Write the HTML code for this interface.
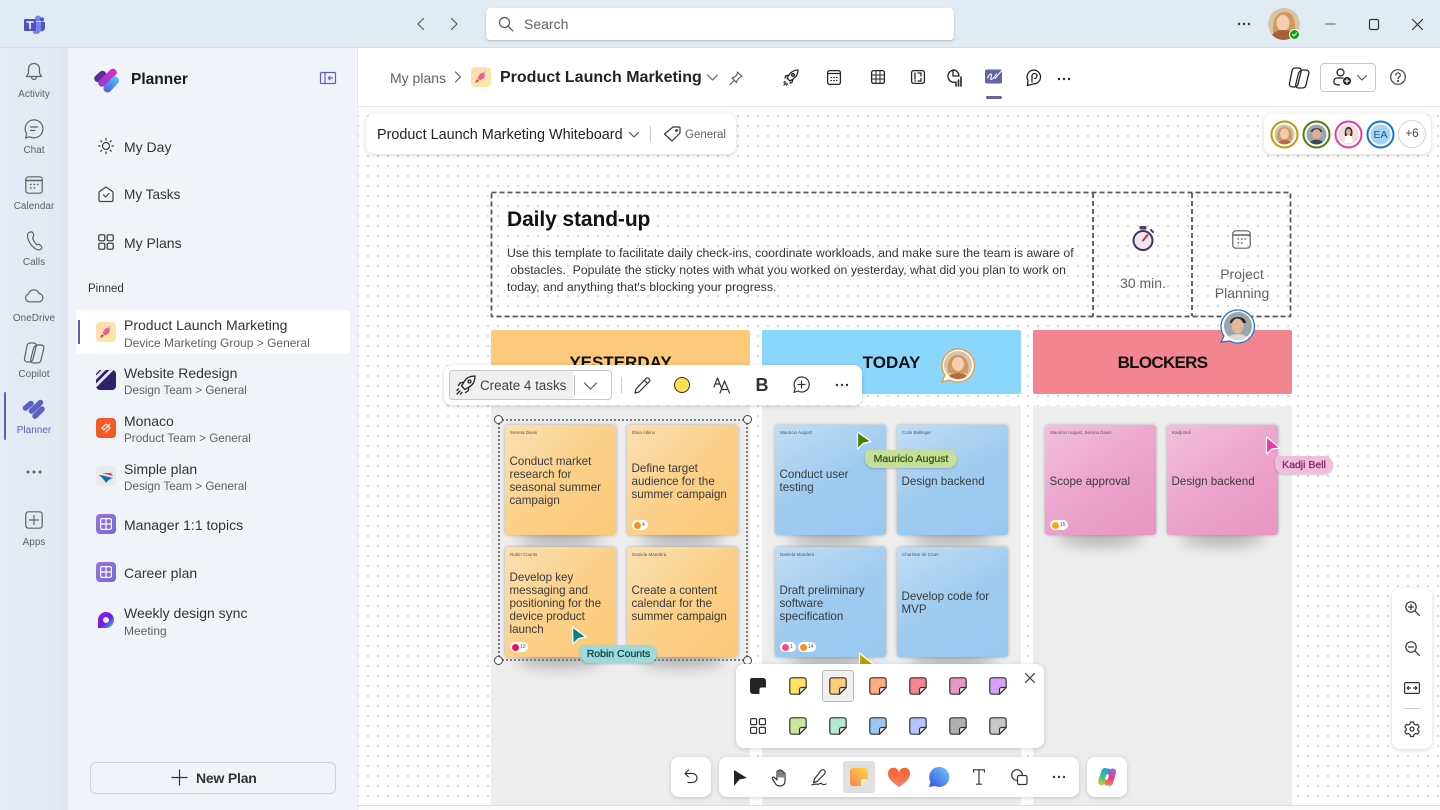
<!DOCTYPE html>
<html lang="en"><head><meta charset="utf-8"><title>Planner</title>
<style>
*{box-sizing:border-box}
html,body{margin:0;padding:0;width:1440px;height:810px;overflow:hidden;background:#fff}
body{font-family:"Liberation Sans",sans-serif;color:#242424;position:relative}
.a{position:absolute}
.t{position:absolute;white-space:nowrap;line-height:16px;height:16px}
svg{position:absolute;overflow:visible;fill:none;stroke:#424242;stroke-width:1.2;stroke-linecap:round;stroke-linejoin:round}
.lab{position:absolute;left:0;width:68px;text-align:center;font-size:10px;color:#616161;line-height:12px}
.nav{font-size:14px;color:#333;left:124px}
.ti{font-size:14px;color:#333;left:124px}
.su{font-size:12px;color:#616161;left:124px}
.pic{position:absolute;left:96px;width:20px;height:20px;border-radius:4px}
.panel{position:absolute;background:#fff;border-radius:8px;box-shadow:0 1px 5px rgba(0,0,0,.18)}
.hd{position:absolute;top:330px;height:64px;width:259px;border-radius:2px;text-align:center;font-size:17px;font-weight:bold;line-height:66px;color:#111}
.col{position:absolute;top:406px;height:399px;width:259px;background:#ededed}
.s{position:absolute;width:111px;height:110px;border-radius:3px;box-shadow:0 0 3px rgba(0,0,0,.3);font-size:11.6px;line-height:13px;color:#3a3a3a;display:flex;align-items:center;padding:2px 4px 0 4.5px;white-space:nowrap}
.sh{position:absolute;width:84px;height:18px;background:rgba(0,0,0,.24);filter:blur(7px);border-radius:50%}
.o{background:linear-gradient(135deg,#fbe0b2 0%,#fbd08a 50%,#fbc976 100%)}
.b{background:linear-gradient(150deg,#c0def6 0%,#9fcbf0 50%,#98c7ee 100%)}
.p{background:linear-gradient(145deg,#f3c0de 0%,#eba2cb 55%,#e995c3 100%)}
.n{position:absolute;left:5px;top:5px;font-size:4.5px;line-height:6px;color:#555}
.r{position:absolute;height:10px;background:#fff;border-radius:5px;font-size:5px;line-height:10px;color:#555;padding-left:10px;bottom:5px}
.r i{position:absolute;left:2px;top:1.5px;width:7px;height:7px;border-radius:50%}
.h{position:absolute;width:9px;height:9px;border-radius:50%;background:#fff;border:1.5px solid #444}
.cl{position:absolute;height:18px;border-radius:4px 10px 10px 10px;font-size:10.5px;line-height:18px;text-align:center;box-shadow:0 1px 2px rgba(0,0,0,.2);-webkit-text-stroke:.3px currentColor}
.w{stroke:#242424;stroke-width:1.3}
</style></head><body>

<!-- top bar -->
<div class="a" style="left:0;top:0;width:1440px;height:48px;background:#e1ebf2;border-bottom:1px solid #d3dde5"></div>
<!-- rail -->
<div class="a" style="left:0;top:48px;width:68px;height:762px;background:linear-gradient(90deg,#e5ebf3 0%,#e3e9f2 85%,#dbe3ed 100%)"></div>
<!-- left pane -->
<div class="a" style="left:68px;top:48px;width:290px;height:762px;background:#f0f4f9;border-right:1px solid #e3e6ea"></div>
<!-- canvas -->
<div class="a" style="left:358px;top:106px;width:1082px;height:699px;background-color:#fff;background-image:radial-gradient(circle at 1px 1px,#b6b6b6 .6px,transparent 1px);background-size:10px 10px;background-position:9px 8px;border-top:1px solid #e6e6e6"></div>
<div class="a" style="left:358px;top:805px;width:1082px;height:5px;background:#fbfbfb;border-top:1px solid #ddd"></div>

<!-- teams logo -->
<svg style="left:24px;top:15px;stroke:none" width="21" height="19" viewBox="0 0 21 19"><circle cx="14" cy="3.500" r="3" fill="#7b83eb"/><circle cx="18" cy="4.500" r="2.200" fill="#5059c9"/><path d="M13 7h7a1 1 0 0 1 1 1v5a3.500 3.500 0 0 1-5 3z" fill="#5059c9"/><path d="M9 7h8v8a5 5 0 0 1-8 3z" fill="#7b83eb"/><rect x="0" y="4" width="12" height="12" rx="1" fill="#4b53bc"/><path d="M3 7h6M6 7v6.500" stroke="#fff" stroke-width="1.600"/></svg>

<svg style="left:416px;top:17px" width="10" height="14"><path d="M7.500 1.500 2 7l5.500 5.500" stroke="#555" stroke-width="1.200"/></svg>
<svg style="left:449px;top:17px" width="10" height="14"><path d="M2.500 1.500 8 7l-5.500 5.500" stroke="#555" stroke-width="1.200"/></svg>
<div class="a" style="left:486px;top:8px;width:468px;height:32px;background:#fff;border-radius:4px;box-shadow:0 1px 2px rgba(0,0,0,.22)"></div>
<svg style="left:498px;top:16px" width="16" height="16"><circle cx="6.500" cy="6.500" r="5" stroke="#555"/><path d="m10.200 10.200 4.800 4.800" stroke="#555"/></svg>
<div class="t" style="left:524px;top:16px;font-size:14px;color:#616161">Search</div>

<svg style="left:1237px;top:22px;stroke:none;fill:#333" width="15" height="4"><circle cx="2" cy="2" r="1.200"/><circle cx="7" cy="2" r="1.200"/><circle cx="12" cy="2" r="1.200"/></svg>
<svg style="left:1268px;top:8px;stroke:none" width="32" height="33" viewBox="0 0 32 33"><circle cx="16" cy="16" r="16" fill="#d8c3ab"/><path d="M5 24C5 8 10 4 17 4s11 6 10 20l-5 4H8z" fill="#d19a5a"/><ellipse cx="15" cy="15" rx="6.500" ry="8" fill="#f3cdb0"/><path d="M4 27c4-5 8-5 11-5s8 0 12 5a16 16 0 0 1-23 0z" fill="#a8603a"/><circle cx="26.500" cy="26.500" r="5" fill="#13a10e" stroke="#fff" stroke-width="1"/><path d="m24.500 26.500 1.500 1.500 2.500-3" stroke="#fff" stroke-width="1"/></svg>
<svg style="left:1326px;top:23px" width="10" height="2"><path d="M0 1h9" stroke="#8a8a8a" stroke-width="1.500"/></svg>
<svg style="left:1369px;top:19px" width="11" height="11"><rect x=".5" y=".5" width="9" height="10" rx="1.500" stroke="#333"/></svg>
<svg style="left:1412px;top:19px" width="11" height="11"><path d="m.5.500 10 10m0-10-10 10" stroke="#333"/></svg>

<!-- rail icons -->
<svg style="left:25px;top:62px" width="18" height="20"><path d="M9 1.500c-3.500 0-5.500 2.500-5.500 6v3.500L1.500 14.500h15L14.500 11V7.500c0-3.500-2-6-5.500-6zM6.500 15a2.500 2.500 0 0 0 5 0" stroke="#616161"/></svg>
<div class="lab" style="top:89px">Activity</div>
<svg style="left:24px;top:119px" width="20" height="20"><path d="M10 .8a9 9 0 1 1-4.200 17L1.500 19l1.200-4.200A9 9 0 0 1 10 .8zM6.500 8h7M6.500 11.500h4.500" stroke="#616161"/></svg>
<div class="lab" style="top:145px">Chat</div>
<svg style="left:25px;top:176px" width="18" height="18"><rect x=".8" y=".8" width="16.400" height="16.400" rx="2.500" stroke="#616161"/><path d="M1 4.500h16M5.500 8.500h.5M9 8.500h.5M12.500 8.500h.5M5.500 12h.5M9 12h.5" stroke="#616161" stroke-width="1.400"/></svg>
<div class="lab" style="top:201px">Calendar</div>
<svg style="left:26px;top:231px" width="17" height="20"><path d="M3 1.500 5.500.8c1 0 1.500 1 2 2.500.4 1.500.2 2.500-1 3.500 1 2.800 2.500 5.500 4.500 7 1.300-.8 2.300-.8 3.500.5 1 1 1.800 2 1.200 3-.8 1.300-2.500 2-4 1.500C7 17.500 2 11 1.500 5c-.1-1.500.4-3 1.500-3.500z" stroke="#616161"/></svg>
<div class="lab" style="top:257px">Calls</div>
<svg style="left:24px;top:288px" width="20" height="15"><path d="M5 13.800A4 4 0 0 1 4.500 6 5.500 5.500 0 0 1 15 5.500 4.200 4.200 0 0 1 15.500 13.800z" stroke="#616161"/></svg>
<div class="lab" style="top:313px">OneDrive</div>
<svg style="left:23px;top:342px" width="22" height="22"><path d="M7 1h3.500c2 0 3 1.500 2.700 3L10 17c-.4 1.800-1.800 3-3.800 3H4.500C2.500 20 1 18.500 1.500 16.500L4 4c.4-1.800 1.500-3 3-3z" stroke="#616161"/><path d="M15 3h3c2 0 3.300 1.500 2.800 3.500L18 18c-.4 2-2 3-4 3h-3.500c-2 0-3.200-1.500-2.800-3.500L10.500 6.500C11 4.500 13 3 15 3z" stroke="#616161"/></svg>
<div class="lab" style="top:369px">Copilot</div>
<div class="a" style="left:4px;top:392px;width:2px;height:48px;background:#5b5fc7;border-radius:1px"></div>
<svg style="left:22px;top:398px" width="24" height="22" viewBox="0 0 24 22"><path d="M3.500 10 9 5.500M9.500 13 18.500 4.500M13 18 20 11" stroke="#5b5fc7" stroke-width="5.500"/></svg>
<div class="lab" style="top:425px;color:#5b5fc7">Planner</div>
<svg style="left:26px;top:470px;stroke:none;fill:#616161" width="16" height="4"><circle cx="2" cy="2" r="1.500"/><circle cx="8" cy="2" r="1.500"/><circle cx="14" cy="2" r="1.500"/></svg>
<svg style="left:25px;top:511px" width="18" height="18"><rect x=".8" y=".8" width="16.400" height="16.400" rx="2.500" stroke="#616161"/><path d="M9 4.500v9M4.500 9h9" stroke="#616161"/></svg>
<div class="lab" style="top:537px">Apps</div>

<!-- left pane content -->
<svg style="left:93px;top:67px" width="28" height="27" viewBox="0 0 28 27"><defs><linearGradient id="g1" gradientUnits="userSpaceOnUse" x1="8" y1="18" x2="22" y2="4"><stop offset="0" stop-color="#8a3fd0"/><stop offset="1" stop-color="#e02cc4"/></linearGradient><linearGradient id="g2" gradientUnits="userSpaceOnUse" x1="22" y1="10" x2="14" y2="26"><stop offset="0" stop-color="#4ac6f0"/><stop offset="1" stop-color="#5a55e0"/></linearGradient></defs><path d="M5 11.500 9.500 7.500" stroke="#5d2a9c" stroke-width="7.500"/><path d="M9 16 20 5.500" stroke="url(#g1)" stroke-width="7.500"/><path d="M14.500 21.500 22 13.500" stroke="url(#g2)" stroke-width="8"/></svg>
<div class="t" style="left:131px;top:72px;font-size:15.500px;font-weight:bold;color:#1a1a1a">Planner</div>
<svg style="left:320px;top:72px" width="16" height="12"><rect x=".5" y=".5" width="15" height="11" rx="1" stroke="#5b5fc7"/><path d="M5 .5v11M12.500 6H8.500M10 4.200 8.300 6 10 7.800" stroke="#5b5fc7"/></svg>

<svg style="left:98px;top:138px" width="16" height="16"><circle cx="8" cy="8" r="3.500" stroke="#424242"/><path d="M8 .5v1.500M8 14v1.500M.5 8H2M14 8h1.500M2.700 2.700l1 1M12.300 12.300l1 1M13.300 2.700l-1 1M3.700 12.300l-1 1" stroke="#424242"/></svg>
<div class="t nav" style="top:139px">My Day</div>
<svg style="left:98px;top:186px" width="16" height="17"><path d="M8 1 1.500 5.500c-.3.200-.5.600-.5 1V14c0 1 .6 1.500 1.500 1.500h11c.9 0 1.500-.5 1.500-1.500V6.500c0-.4-.2-.8-.5-1zM5.500 9l2 2 3.500-3.500" stroke="#424242"/></svg>
<div class="t nav" style="top:187px;font-size:13.600px">My Tasks</div>
<svg style="left:98px;top:234px" width="16" height="16"><rect x=".8" y=".8" width="6" height="6" rx="1.200" stroke="#333"/><rect x="9.200" y=".8" width="6" height="6" rx="1.200" stroke="#333"/><rect x=".8" y="9.200" width="6" height="6" rx="1.200" stroke="#333"/><rect x="9.200" y="9.200" width="6" height="6" rx="1.200" stroke="#333"/></svg>
<div class="t nav" style="top:235px">My Plans</div>
<div class="t" style="left:88px;top:281px;font-size:11.500px;color:#333">Pinned</div>

<div class="a" style="left:76px;top:310px;width:274px;height:44px;background:#fff;border-radius:4px"></div>
<div class="a" style="left:78px;top:320px;width:2px;height:24px;background:#5b5fc7"></div>

<div class="pic" style="top:322px;background:linear-gradient(135deg,#fddcae,#fbe8a8)"></div>
<svg style="left:99px;top:325px;stroke:none" width="14" height="14"><path d="M12 1 6 4 3.500 8l2.500 2.500 4-2.500z" fill="#e8608a"/><path d="M12 1 9 2.500 11 5z" fill="#b8c4f0"/><path d="M3 9 1 13l4-2z" fill="#d02c60"/></svg>
<div class="t ti" style="top:317px">Product Launch Marketing</div>
<div class="t su" style="top:335px">Device Marketing Group &gt; General</div>

<div class="pic" style="top:370px;background:#2f2168;overflow:hidden"><div class="a" style="left:-6px;top:-2px;width:30px;height:2.500px;background:#e8e4f6;transform:rotate(-45deg);transform-origin:left;margin-top:14px"></div><div class="a" style="left:-2px;top:2px;width:30px;height:2.500px;background:#e8e4f6;transform:rotate(-45deg);transform-origin:left;margin-top:14px"></div><div class="a" style="left:-8px;top:-6px;width:30px;height:2.500px;background:#e8e4f6;transform:rotate(-45deg);transform-origin:left;margin-top:14px"></div></div>
<div class="t ti" style="top:365px">Website Redesign</div>
<div class="t su" style="top:383px;font-size:11.700px">Design Team &gt; General</div>

<div class="pic" style="top:418px;background:#f25a28"></div>
<svg style="left:99px;top:421px" width="14" height="14"><path d="m3 7 4-4 2 2-4 4-2-2zm4 0 4-4M7 11l4-4-2-2" stroke="#fff"/></svg>
<div class="t ti" style="top:413px">Monaco</div>
<div class="t su" style="top:431px;font-size:11.700px">Product Team &gt; General</div>

<div class="pic" style="top:466px;background:#e9e9e9"></div>
<svg style="left:98px;top:470px;stroke:none" width="16" height="14"><path d="M1 5c4 0 9 2 14 3-3 1-5 2-7 5C6 9 3 7 1 5z" fill="#0f6cbd"/><path d="M4 3l9 0 2 3c-4-1-7-2-11-3z" fill="#e8463a"/></svg>
<div class="t ti" style="top:461px">Simple plan</div>
<div class="t su" style="top:479px;font-size:11.700px">Design Team &gt; General</div>

<div class="pic" style="top:514px;background:linear-gradient(135deg,#9a73e0,#6f6bd8)"></div>
<svg style="left:100px;top:518px" width="12" height="12"><rect x=".6" y=".6" width="10.800" height="10.800" rx="1.500" stroke="#fff"/><path d="M.6 6h10.800M6 6v5.400M6 .6v5.400" stroke="#fff"/></svg>
<div class="t ti" style="top:517px">Manager 1:1 topics</div>

<div class="pic" style="top:562px;background:linear-gradient(135deg,#9a73e0,#6f6bd8)"></div>
<svg style="left:100px;top:566px" width="12" height="12"><rect x=".6" y=".6" width="10.800" height="10.800" rx="1.500" stroke="#fff"/><path d="M.6 6h10.800M6 6v5.400M6 .6v5.400" stroke="#fff"/></svg>
<div class="t ti" style="top:565px">Career plan</div>

<svg style="left:98px;top:612px;stroke:none" width="16" height="17" viewBox="0 0 16 17"><defs><linearGradient id="g3" x1="0" y1="0" x2="1" y2="1"><stop offset="0" stop-color="#9b1fe8"/><stop offset=".55" stop-color="#6a1fe0"/><stop offset="1" stop-color="#3fd0f0"/></linearGradient></defs><path d="M0 16V8a8 8 0 1 1 8 8z" fill="url(#g3)"/><circle cx="8" cy="8" r="3" fill="#f0f4f9"/></svg>
<div class="t ti" style="top:605px">Weekly design sync</div>
<div class="t su" style="top:623px">Meeting</div>

<div class="a" style="left:90px;top:762px;width:246px;height:32px;border:1px solid #cfd3d8;border-radius:6px"></div>
<svg style="left:172px;top:770px" width="15" height="15"><path d="M7.500 0v15M0 7.500h15" stroke="#333"/></svg>
<div class="t" style="left:196px;top:770px;font-size:14px;font-weight:bold;color:#333;letter-spacing:-.2px">New Plan</div>

<!-- header -->
<div class="t" style="left:390px;top:70px;font-size:14px;color:#616161">My plans</div>
<svg style="left:454px;top:71px" width="8" height="12"><path d="m1.500 1 5 5-5 5" stroke="#616161"/></svg>
<div class="a" style="left:471px;top:67px;width:20px;height:20px;border-radius:4px;background:linear-gradient(135deg,#fddcae,#fbe8a8)"></div>
<svg style="left:474px;top:70px;stroke:none" width="14" height="14"><path d="M12 1 6 4 3.500 8l2.500 2.500 4-2.500z" fill="#e8608a"/><path d="M12 1 9 2.500 11 5z" fill="#b8c4f0"/><path d="M3 9 1 13l4-2z" fill="#d02c60"/></svg>
<div class="t" style="left:500px;top:70px;font-size:16px;font-weight:bold;color:#242424">Product Launch Marketing</div>
<svg style="left:707px;top:74px" width="11" height="7"><path d="m.5 1 5 5 5-5" stroke="#616161"/></svg>
<svg style="left:729px;top:71px" width="14" height="14"><path d="M8.500 1 13 5.500l-2.500 1-2.500 3-.5 2L3 7l2-.5 3-2.500zM5 9.500 1 13.500" stroke="#616161"/></svg>

<svg style="left:783px;top:69px" width="16" height="17"><path d="M15 1c-4 0-7 2-9 5L4 9l3 3 3-2c3-2 5-5 5-9zM6 6 2.500 7 2 9M10 10l-1 3.500-2 .5" class="w"/><circle cx="10" cy="6" r="1.300" class="w"/><path d="M1 16l2-2M3.500 16l1-1M1 13.500l1-1" class="w"/></svg>
<svg style="left:827px;top:70px" width="14" height="15"><rect x=".6" y=".6" width="12.800" height="13.800" rx="2" class="w"/><path d="M1 3.500h12M4 7.500h.5M6.800 7.500h.5M9.500 7.500h.5M4 10.500h.5M6.800 10.500h.5M9.500 10.500h.5" class="w"/></svg>
<svg style="left:871px;top:70px" width="14" height="14"><rect x=".6" y=".6" width="12.800" height="12.800" rx="2" class="w"/><path d="M5 .6v12.800M9 .6v12.800M.6 5h12.800M.6 9h12.800" class="w" style="stroke-width:1"/></svg>
<svg style="left:911px;top:70px" width="14" height="14"><rect x=".6" y=".6" width="12.800" height="12.800" rx="2" class="w"/><path d="M4 3v6M7 3h3v3M10 8.500V11H7M4 11h.5" class="w"/></svg>
<svg style="left:946px;top:69px" width="16" height="18"><path d="M6 1.500A6 6 0 1 0 10 13M7 .8a6.500 6.500 0 0 1 6 6.200H7z" class="w"/><path d="M10 17v-3M12.500 17v-6M15 17V8" stroke="#242424" stroke-width="1.600"/></svg>
<svg style="left:985px;top:69px;stroke:none" width="18" height="15"><rect width="17" height="14" y=".5" rx="2" fill="#6264a7"/><path d="M2.500 9c2-4 4-5 4-3s-1.500 5 0 4.500S11 6 11.500 5M10 9.500c2.500-3 5-6 7-8" stroke="#fff" stroke-width="1.100" fill="none"/></svg>
<div class="a" style="left:986px;top:96px;width:16px;height:3px;border-radius:2px;background:#6264a7"></div>
<svg style="left:1026px;top:69px" width="16" height="17"><path d="M8 1a7 7 0 1 1-1 14l-5.500 1.500.5-5A7 7 0 0 1 8 1zM6 13V7a2.500 2.500 0 1 1 2.500 2.500" class="w"/></svg>
<svg style="left:1057px;top:77px;stroke:none;fill:#242424" width="14" height="4"><circle cx="2" cy="2" r="1.200"/><circle cx="7" cy="2" r="1.200"/><circle cx="12" cy="2" r="1.200"/></svg>

<svg style="left:1288px;top:67px" width="22" height="22"><path d="M7 1h3.500c2 0 3 1.500 2.700 3L10 17c-.4 1.800-1.800 3-3.800 3H4.500C2.500 20 1 18.500 1.500 16.500L4 4c.4-1.800 1.500-3 3-3z" class="w"/><path d="M15 3h3c2 0 3.300 1.500 2.800 3.500L18 18c-.4 2-2 3-4 3h-3.500c-2 0-3.200-1.500-2.800-3.500L10.500 6.500C11 4.500 13 3 15 3z" class="w"/></svg>
<div class="a" style="left:1320px;top:63px;width:56px;height:29px;border:1px solid #c8c8c8;border-radius:4px"></div>
<svg style="left:1333px;top:68px" width="20" height="18"><circle cx="7.500" cy="4.500" r="3.500" class="w"/><path d="M1 15v-2a3 3 0 0 1 3-3h6M1 15c1 1.500 3.500 2 5.500 2" class="w"/><circle cx="14" cy="13" r="4" fill="#242424" stroke="none"/><path d="M14 11v4M12 13h4" stroke="#fff"/></svg>
<svg style="left:1357px;top:75px" width="10" height="6"><path d="m.5.500 4.500 4.500L9.500.5" stroke="#555"/></svg>
<svg style="left:1390px;top:69px" width="16" height="16"><circle cx="8" cy="8" r="7.300" stroke="#424242"/><path d="M5.800 6.200c0-3 4.500-3 4.500 0 0 1.800-2.300 1.800-2.300 3.600" stroke="#424242"/><circle cx="8" cy="12" r=".5" fill="#424242"/></svg>

<!-- board title -->
<div class="panel" style="left:366px;top:114px;width:370px;height:40px"></div>
<div class="t" style="left:377px;top:127px;font-size:14.400px;color:#242424">Product Launch Marketing Whiteboard</div>
<svg style="left:629px;top:132px" width="10" height="6"><path d="m.5.500 4.500 4.500L9.500.5" stroke="#555"/></svg>
<div class="a" style="left:650px;top:126px;width:1px;height:16px;background:#ccc"></div>
<svg style="left:663px;top:126px" width="18" height="16"><path d="M10 1h6a1 1 0 0 1 1 1v5L9 15 1.500 8z" stroke="#333"/><circle cx="13.500" cy="4.500" r=".8" stroke="#333"/></svg>
<div class="t" style="left:685px;top:127px;font-size:11.500px;color:#616161">General</div>

<!-- avatars -->
<div class="panel" style="left:1264px;top:114px;width:167px;height:40px"></div>
<svg style="left:1270px;top:120px;stroke:none" width="29" height="29" viewBox="0 0 29 29"><circle cx="14.500" cy="14.500" r="13" fill="#fff" stroke="#c19c00" stroke-width="2"/><circle cx="14.500" cy="14.500" r="10" fill="#d8c3ab"/><path d="M7 20C6 10 10 7 14.500 7S23 10 22 20z" fill="#cf9a5e"/><ellipse cx="14.500" cy="14" rx="4.500" ry="5.500" fill="#f3cdb0"/><path d="M8 22c3-3 10-3 13 0a10 10 0 0 1-13 0z" fill="#b56c45"/></svg>
<svg style="left:1302px;top:120px;stroke:none" width="29" height="29" viewBox="0 0 29 29"><circle cx="14.500" cy="14.500" r="13" fill="#fff" stroke="#498205" stroke-width="2"/><circle cx="14.500" cy="14.500" r="10" fill="#9aa6ac"/><path d="M9 12c0-5 11-5 11 0z" fill="#2a2a2a"/><ellipse cx="14.500" cy="14" rx="4.500" ry="5" fill="#dfb090"/><path d="M8 22c3-3 10-3 13 0a10 10 0 0 1-13 0z" fill="#3a4a55"/></svg>
<svg style="left:1334px;top:120px;stroke:none" width="29" height="29" viewBox="0 0 29 29"><circle cx="14.500" cy="14.500" r="13" fill="#fff" stroke="#e43ba6" stroke-width="2"/><circle cx="14.500" cy="14.500" r="10" fill="#f2dcdc"/><path d="M11 16c-1-6 1-9 3.500-9s5 3 3.500 9z" fill="#3a2a2a"/><ellipse cx="14.500" cy="12" rx="2.500" ry="3.200" fill="#e0b090"/><path d="M10.500 23c0-6 2-8 4-8s4 2 4 8z" fill="#fff"/></svg>
<svg style="left:1366px;top:120px;stroke:none" width="29" height="29" viewBox="0 0 29 29"><circle cx="14.500" cy="14.500" r="13" fill="#fff" stroke="#0f78d4" stroke-width="2"/><circle cx="14.500" cy="14.500" r="10" fill="#a8d4f2"/></svg>
<div class="t" style="left:1366px;top:127px;width:29px;text-align:center;font-size:10.500px;color:#0f5a9a">EA</div>
<div class="a" style="left:1398px;top:120px;width:28px;height:28px;border-radius:50%;border:1px solid #d4d4d4;background:#fff"></div>
<div class="t" style="left:1398px;top:126px;width:28px;text-align:center;font-size:11.500px;color:#424242">+6</div>

<!-- template -->
<svg style="left:0;top:0" width="1440" height="810"><g style="stroke:#555;stroke-width:1.800;stroke-linecap:butt" stroke-dasharray="5 3"><rect x="491.500" y="192.500" width="799" height="124"/><path d="M1093 193v123M1192 193v123"/></g></svg>
<div class="t" style="left:507px;top:207px;height:26px;line-height:26px;font-size:21px;font-weight:bold;color:#111;letter-spacing:-.1px">Daily stand-up</div>
<div class="t" style="left:507px;top:245px;font-size:12.300px;color:#333">Use this template to facilitate daily check-ins, coordinate workloads, and make sure the team is aware of</div>
<div class="t" style="left:507px;top:262px;font-size:12.300px;color:#333;white-space:pre"> obstacles.  Populate the sticky notes with what you worked on yesterday, what did you plan to work on</div>
<div class="t" style="left:507px;top:279px;font-size:12.300px;color:#333">today, and anything that's blocking your progress.</div>
<svg style="left:1131px;top:225px;stroke:none" width="24" height="29" viewBox="0 0 24 29"><rect x="8.500" y="1" width="7" height="3.500" rx="1" fill="#4b3a70"/><path d="M20 5l2 2" stroke="#4b3a70" stroke-width="2"/><circle cx="12" cy="15.500" r="10.500" fill="#3f2f6e"/><circle cx="12" cy="15.500" r="8.500" fill="#eee7ea"/><path d="M12 15.500 16.500 10" stroke="#e0245e" stroke-width="2"/></svg>
<div class="t" style="left:1094px;top:275px;width:98px;text-align:center;font-size:14px;color:#616161">30 min.</div>
<svg style="left:1232px;top:230px" width="19" height="19"><rect x=".8" y=".8" width="17.400" height="17.400" rx="3" stroke="#616161" stroke-width="1.200"/><path d="M1 5h17M6 9h.5M9.500 9h.5M13 9h.5M6 13h.5M9.500 13h.5" stroke="#616161" stroke-width="1.400"/></svg>
<div class="t" style="left:1193px;top:266px;width:98px;text-align:center;font-size:14px;color:#616161">Project</div>
<div class="t" style="left:1193px;top:285px;width:98px;text-align:center;font-size:14px;color:#616161">Planning</div>

<!-- columns -->
<div class="hd" style="left:491px;background:#fdca7c">YESTERDAY</div>
<div class="hd" style="left:762px;background:#8bd6fc">TODAY</div>
<div class="hd" style="left:1033px;background:#f2858f;letter-spacing:-.7px">BLOCKERS</div>
<div class="col" style="left:491px"></div>
<div class="col" style="left:762px"></div>
<div class="col" style="left:1033px"></div>

<!-- shadows -->
<div class="sh" style="left:518px;top:528px"></div><div class="sh" style="left:640px;top:528px"></div>
<div class="sh" style="left:518px;top:650px"></div><div class="sh" style="left:640px;top:650px"></div>
<div class="sh" style="left:788px;top:528px"></div><div class="sh" style="left:910px;top:528px"></div>
<div class="sh" style="left:788px;top:650px"></div><div class="sh" style="left:910px;top:650px"></div>
<div class="sh" style="left:1058px;top:528px"></div><div class="sh" style="left:1180px;top:528px"></div>

<!-- stickies -->
<div class="s o" style="left:505px;top:425px"><span class="n">Serena Davis</span><div>Conduct market<br>research for<br>seasonal summer<br>campaign</div></div>
<div class="s o" style="left:627px;top:425px"><span class="n">Elvia Atkins</span><div>Define target<br>audience for the<br>summer campaign</div><span class="r" style="left:5px;width:16px"><i style="background:#f7931e"></i>4</span></div>
<div class="s o" style="left:505px;top:547px"><span class="n">Robin Counts</span><div>Develop key<br>messaging and<br>positioning for the<br>device product<br>launch</div><span class="r" style="left:5px;width:18px"><i style="background:#e8125c"></i>12</span></div>
<div class="s o" style="left:627px;top:547px"><span class="n">Daniela Mandera</span><div>Create a content<br>calendar for the<br>summer campaign</div></div>

<div class="s b" style="left:775px;top:425px"><span class="n">Mauricio August</span><div>Conduct user<br>testing</div></div>
<div class="s b" style="left:897px;top:425px"><span class="n">Colin Ballinger</span><div>Design backend</div></div>
<div class="s b" style="left:775px;top:547px"><span class="n">Daniela Mandera</span><div>Draft preliminary<br>software<br>specification</div><span class="r" style="left:5px;width:16px"><i style="background:#e8508a"></i>1</span><span class="r" style="left:23px;width:18px"><i style="background:#f7931e"></i>14</span></div>
<div class="s b" style="left:897px;top:547px"><span class="n">Charlotte de Crum</span><div>Develop code for<br>MVP</div></div>

<div class="s p" style="left:1045px;top:425px"><span class="n">Mauricio August, Serena Davis</span><div>Scope approval</div><span class="r" style="left:5px;width:18px"><i style="background:#f7a81e"></i>15</span></div>
<div class="s p" style="left:1167px;top:425px"><span class="n">Kadji Bell</span><div>Design backend</div></div>

<!-- selection -->
<div class="a" style="left:498px;top:419px;width:250px;height:242px;border:2px dotted #777"></div>
<div class="h" style="left:494px;top:415px"></div><div class="h" style="left:743px;top:415px"></div>
<div class="h" style="left:494px;top:656px"></div><div class="h" style="left:743px;top:656px"></div>

<!-- comment avatars -->
<svg style="left:939px;top:347px;stroke:none" width="38" height="38" viewBox="0 0 38 38"><path d="M19 2a16.500 16.500 0 1 1-8 31l-8 2 3-7A16.500 16.500 0 0 1 19 2z" fill="#fff" stroke="#f7931e" stroke-width="1.200"/><circle cx="19" cy="18" r="14" fill="#d8c3ab"/><path d="M9 26C7 12 13 8 19 8s12 5 10 18z" fill="#cf9a5e"/><ellipse cx="19" cy="17" rx="6" ry="7" fill="#f3cdb0"/><path d="M10 29c4-4 14-4 18 0a14 14 0 0 1-18 0z" fill="#b56c45"/></svg>
<svg style="left:1218px;top:308px;stroke:none" width="38" height="38" viewBox="0 0 38 38"><path d="M20 2a16.500 16.500 0 1 1-8 31l-9 1 3-6A16.500 16.500 0 0 1 20 2z" fill="#fff" stroke="#0f78d4" stroke-width="1.200"/><circle cx="20" cy="18" r="14" fill="#9aa6ac"/><path d="M12 15c0-8 16-8 16 0z" fill="#2a2a2a"/><ellipse cx="19.500" cy="18" rx="6" ry="7.500" fill="#e3b898"/><path d="M11 29c4-4 14-4 18 0a14 14 0 0 1-18 0z" fill="#d8d8d8"/></svg>

<!-- selection toolbar -->
<div class="panel" style="left:444px;top:365px;width:418px;height:40px"></div>
<div class="a" style="left:449px;top:370px;width:163px;height:30px;border:1px solid #c8c8c8;border-radius:4px"></div>
<div class="a" style="left:450px;top:371px;width:123px;height:28px;background:#f0f0f0;border-radius:3px 0 0 3px"></div>
<svg style="left:456px;top:375px" width="20" height="20"><path d="M19 1c-5 0-9 2-11 6L5.500 11l3.500 3.500L13 12c4-2 6-6 6-11zM8 7 4 8l-1.500 2.500M13 12l-1 4-2.500 1.500" class="w"/><circle cx="13.500" cy="6.500" r="1.500" class="w"/><path d="M1 19l3-3M4.500 19l1.500-1.500M1 15.500 2.500 14" class="w"/></svg>
<div class="t" style="left:480px;top:378px;font-size:13.400px;color:#424242">Create 4 tasks</div>
<div class="a" style="left:574px;top:375px;width:1px;height:20px;background:#bbb"></div>
<svg style="left:584px;top:382px" width="13" height="8"><path d="m.5 1 6 6 6-6" stroke="#555"/></svg>
<div class="a" style="left:621px;top:377px;width:1px;height:16px;background:#ccc"></div>
<svg style="left:634px;top:377px" width="17" height="17"><path d="M12 1.500c1-1 2-.8 3 .2s1.200 2 .2 3L5 15l-4 1 1-4zM10.500 3.500l3 3" stroke="#333"/></svg>
<div class="a" style="left:674px;top:377px;width:16px;height:16px;border-radius:50%;background:#fde050;border:1px solid #333"></div>
<svg style="left:713px;top:377px" width="18" height="17"><path d="M1 10 4.500 1 8 10M2.200 7h4.600M7 16 11.500 4 16.500 16M8.500 12.500h6.500" stroke="#333"/></svg>
<div class="t" style="left:752px;top:377px;width:20px;text-align:center;font-size:18px;font-weight:bold;color:#333">B</div>
<svg style="left:793px;top:376px" width="17" height="18"><path d="M8.500 1a7.500 7.500 0 1 1-3.500 14l-4 1.500 1.200-4.200A7.500 7.500 0 0 1 8.500 1zM8.500 5v7M5 8.500h7" stroke="#333"/></svg>
<svg style="left:835px;top:383px;stroke:none;fill:#333" width="14" height="4"><circle cx="2" cy="2" r="1.200"/><circle cx="7" cy="2" r="1.200"/><circle cx="12" cy="2" r="1.200"/></svg>

<!-- cursors -->
<svg style="left:856px;top:431px" width="18" height="20"><path d="M1.500 1 15 10.500 7 12.500 1.500 18z" fill="#498205" stroke="#fff"/></svg>
<div class="cl" style="left:865px;top:450px;width:92px;background:#c5df9b;color:#2f5a12">Mauricio August</div>
<svg style="left:571px;top:626px" width="18" height="20"><path d="M1.500 1 15 11 7.500 12.500 2 18z" fill="#038387" stroke="#fff"/></svg>
<div class="cl" style="left:580px;top:645px;width:77px;background:#9fd9da;color:#034a4c">Robin Counts</div>
<svg style="left:1265px;top:436px" width="18" height="20"><path d="M1.500 1 15 12 7 13 1.500 18z" fill="#e43ba6" stroke="#fff"/></svg>
<div class="cl" style="left:1275px;top:456px;width:58px;background:#f2bcdc;color:#862a6c">Kadji Bell</div>
<svg style="left:858px;top:652px" width="18" height="14"><path d="M1.500 1 15 12v2H1.500z" fill="#c19c00" stroke="#fff"/></svg>

<!-- palette -->
<div class="panel" style="left:736px;top:664px;width:308px;height:84px"></div>
<div class="a" style="left:822px;top:670px;width:32px;height:32px;background:#f0f0f0;border:1px solid #bbb;border-radius:3px"></div>
<svg style="left:749px;top:677px;stroke:none" width="18" height="18"><path d="M3 1h11a3 3 0 0 1 3 3v6l-7 7H4a3 3 0 0 1-3-3V3a2 2 0 0 1 2-2z" fill="#242424"/><path d="M17 10.500h-4.500a2 2 0 0 0-2 2V17z" fill="#fff"/></svg>
<svg style="left:789px;top:677px" width="18" height="18"><path d="M3 .8h12a2.200 2.200 0 0 1 2.200 2.200v7.500l-6.700 6.700H3A2.200 2.200 0 0 1 .8 15V3A2.200 2.200 0 0 1 3 .8z" fill="#ffe45c" stroke="#333"/><path d="M17.200 10.500h-4.700a2 2 0 0 0-2 2v4.700z" fill="#f7e9dc" stroke="#333"/></svg>
<svg style="left:829px;top:677px" width="18" height="18"><path d="M3 .8h12a2.200 2.200 0 0 1 2.200 2.200v7.500l-6.700 6.700H3A2.200 2.200 0 0 1 .8 15V3A2.200 2.200 0 0 1 3 .8z" fill="#ffcb7c" stroke="#333"/><path d="M17.200 10.500h-4.700a2 2 0 0 0-2 2v4.700z" fill="#f7e9dc" stroke="#333"/></svg>
<svg style="left:869px;top:677px" width="18" height="18"><path d="M3 .8h12a2.200 2.200 0 0 1 2.200 2.200v7.500l-6.700 6.700H3A2.200 2.200 0 0 1 .8 15V3A2.200 2.200 0 0 1 3 .8z" fill="#ffad7f" stroke="#333"/><path d="M17.200 10.500h-4.700a2 2 0 0 0-2 2v4.700z" fill="#f7e9dc" stroke="#333"/></svg>
<svg style="left:909px;top:677px" width="18" height="18"><path d="M3 .8h12a2.200 2.200 0 0 1 2.200 2.200v7.500l-6.700 6.700H3A2.200 2.200 0 0 1 .8 15V3A2.200 2.200 0 0 1 3 .8z" fill="#f4858f" stroke="#333"/><path d="M17.200 10.500h-4.700a2 2 0 0 0-2 2v4.700z" fill="#f7e9dc" stroke="#333"/></svg>
<svg style="left:949px;top:677px" width="18" height="18"><path d="M3 .8h12a2.200 2.200 0 0 1 2.200 2.200v7.500l-6.700 6.700H3A2.200 2.200 0 0 1 .8 15V3A2.200 2.200 0 0 1 3 .8z" fill="#ea97c4" stroke="#333"/><path d="M17.200 10.500h-4.700a2 2 0 0 0-2 2v4.700z" fill="#f7e9dc" stroke="#333"/></svg>
<svg style="left:989px;top:677px" width="18" height="18"><path d="M3 .8h12a2.200 2.200 0 0 1 2.200 2.200v7.500l-6.700 6.700H3A2.200 2.200 0 0 1 .8 15V3A2.200 2.200 0 0 1 3 .8z" fill="#da9eff" stroke="#333"/><path d="M17.200 10.500h-4.700a2 2 0 0 0-2 2v4.700z" fill="#f7e9dc" stroke="#333"/></svg>
<svg style="left:1025px;top:673px" width="10" height="10"><path d="m.5.500 9 9m0-9-9 9" stroke="#333"/></svg>
<svg style="left:750px;top:718px" width="16" height="16"><rect x=".6" y=".6" width="6" height="6" rx="1" stroke="#333"/><rect x="9.400" y=".6" width="6" height="6" rx="1" stroke="#333"/><rect x=".6" y="9.400" width="6" height="6" rx="1" stroke="#333"/><rect x="9.400" y="9.400" width="6" height="6" rx="1" stroke="#333"/></svg>
<svg style="left:789px;top:717px" width="18" height="18"><path d="M3 .8h12a2.200 2.200 0 0 1 2.200 2.200v7.500l-6.700 6.700H3A2.200 2.200 0 0 1 .8 15V3A2.200 2.200 0 0 1 3 .8z" fill="#c9e69a" stroke="#333"/><path d="M17.200 10.500h-4.700a2 2 0 0 0-2 2v4.700z" fill="#f7f0e4" stroke="#333"/></svg>
<svg style="left:829px;top:717px" width="18" height="18"><path d="M3 .8h12a2.200 2.200 0 0 1 2.200 2.200v7.500l-6.700 6.700H3A2.200 2.200 0 0 1 .8 15V3A2.200 2.200 0 0 1 3 .8z" fill="#b3ead0" stroke="#333"/><path d="M17.200 10.500h-4.700a2 2 0 0 0-2 2v4.700z" fill="#f7f0e4" stroke="#333"/></svg>
<svg style="left:869px;top:717px" width="18" height="18"><path d="M3 .8h12a2.200 2.200 0 0 1 2.200 2.200v7.500l-6.700 6.700H3A2.200 2.200 0 0 1 .8 15V3A2.200 2.200 0 0 1 3 .8z" fill="#98c8ef" stroke="#333"/><path d="M17.200 10.500h-4.700a2 2 0 0 0-2 2v4.700z" fill="#f7f0e4" stroke="#333"/></svg>
<svg style="left:909px;top:717px" width="18" height="18"><path d="M3 .8h12a2.200 2.200 0 0 1 2.200 2.200v7.500l-6.700 6.700H3A2.200 2.200 0 0 1 .8 15V3A2.200 2.200 0 0 1 3 .8z" fill="#b5c4ff" stroke="#333"/><path d="M17.200 10.500h-4.700a2 2 0 0 0-2 2v4.700z" fill="#f7f0e4" stroke="#333"/></svg>
<svg style="left:949px;top:717px" width="18" height="18"><path d="M3 .8h12a2.200 2.200 0 0 1 2.200 2.200v7.500l-6.700 6.700H3A2.200 2.200 0 0 1 .8 15V3A2.200 2.200 0 0 1 3 .8z" fill="#b0b0b0" stroke="#333"/><path d="M17.200 10.500h-4.700a2 2 0 0 0-2 2v4.700z" fill="#f7f0e4" stroke="#333"/></svg>
<svg style="left:989px;top:717px" width="18" height="18"><path d="M3 .8h12a2.200 2.200 0 0 1 2.200 2.200v7.500l-6.700 6.700H3A2.200 2.200 0 0 1 .8 15V3A2.200 2.200 0 0 1 3 .8z" fill="#c8c8c8" stroke="#333"/><path d="M17.200 10.500h-4.700a2 2 0 0 0-2 2v4.700z" fill="#f7f0e4" stroke="#333"/></svg>

<!-- bottom toolbars -->
<div class="panel" style="left:671px;top:757px;width:40px;height:40px"></div>
<svg style="left:684px;top:769px" width="14" height="16"><path d="M4.500 1 1 4.500 4.500 8M1 4.500h7.500a4.500 4.500 0 0 1 0 9H4" stroke="#333"/></svg>
<div class="panel" style="left:719px;top:757px;width:360px;height:40px"></div>
<svg style="left:733px;top:769px;stroke:none" width="15" height="18"><path d="M1 1 14 9 6.500 10.500 1 17z" fill="#242424"/></svg>
<svg style="left:771px;top:769px" width="16" height="18"><path d="M6 9V3c0-1.500 2-1.500 2 0v5V2c0-1.500 2-1.500 2 0v6V3c0-1.500 2-1.500 2 0v5V5c0-1.500 2-1.500 2 0v7c0 3-2 5-5 5-3 0-4-1-5-3L1.500 10c-1-1.500.8-2.500 2-1.500L6 11z" stroke="#333"/></svg>
<svg style="left:811px;top:769px" width="17" height="18"><path d="M10 1.500c1-1 2.500-1 3.500 0s1 2.500 0 3.500L6 12.500l-3.500 1 1-3.500zM1 16c3-2 5 0 7-1s2-1 3 0 2 1 4 0" stroke="#333"/></svg>
<div class="a" style="left:843px;top:761px;width:32px;height:32px;background:#e0e0e0;border-radius:3px"></div>
<svg style="left:850px;top:768px;stroke:none" width="18" height="18" viewBox="0 0 18 18"><defs><linearGradient id="g4" x1="1" y1="0" x2="0" y2="1"><stop offset="0" stop-color="#ffd83c"/><stop offset="1" stop-color="#f5825a"/></linearGradient></defs><path d="M3 0h12a3 3 0 0 1 3 3v8l-7 7H3a3 3 0 0 1-3-3V3a3 3 0 0 1 3-3z" fill="url(#g4)"/><path d="M18 11h-5a2 2 0 0 0-2 2v5z" fill="#fff3c0"/></svg>
<svg style="left:888px;top:768px;stroke:none" width="22" height="20" viewBox="0 0 22 20"><defs><linearGradient id="g5" x1="0" y1="0" x2="0" y2="1"><stop offset="0" stop-color="#f8622a"/><stop offset="1" stop-color="#f58070"/></linearGradient></defs><path d="M11 19C4 14 0 10.500 0 6a5.500 5.500 0 0 1 11-1.500A5.500 5.500 0 0 1 22 6c0 4.500-4 8-11 13z" fill="url(#g5)"/></svg>
<svg style="left:929px;top:767px;stroke:none" width="20" height="21" viewBox="0 0 20 21"><defs><linearGradient id="g6" x1="1" y1="0" x2="0" y2="1"><stop offset="0" stop-color="#70cdf0"/><stop offset="1" stop-color="#3a50e8"/></linearGradient></defs><path d="M10 0a10 10 0 1 1-4 19l-6 1 1.500-5A10 10 0 0 1 10 0z" fill="url(#g6)"/></svg>
<svg style="left:973px;top:769px" width="12" height="16"><path d="M.6 3V.8h10.800V3M6 .8v14.400M3.500 15.200h5" stroke="#333"/></svg>
<svg style="left:1011px;top:769px" width="17" height="16"><circle cx="6" cy="6" r="5.300" stroke="#333"/><rect x="6.500" y="6.500" width="9.500" height="9" rx="1.500" fill="#fff" stroke="#333"/></svg>
<svg style="left:1052px;top:775px;stroke:none;fill:#333" width="14" height="4"><circle cx="2" cy="2" r="1.200"/><circle cx="7" cy="2" r="1.200"/><circle cx="12" cy="2" r="1.200"/></svg>
<div class="panel" style="left:1087px;top:757px;width:40px;height:40px"></div>
<svg style="left:1096px;top:767px" width="22" height="20" viewBox="0 0 22 20"><defs><linearGradient id="g7" gradientUnits="userSpaceOnUse" x1="9" y1="1" x2="5" y2="19"><stop offset="0" stop-color="#1f9be8"/><stop offset=".55" stop-color="#4cc27a"/><stop offset="1" stop-color="#f0d030"/></linearGradient><linearGradient id="g8" gradientUnits="userSpaceOnUse" x1="16" y1="1" x2="14" y2="19"><stop offset="0" stop-color="#8a6ee8"/><stop offset=".55" stop-color="#e83a8a"/><stop offset="1" stop-color="#f58a3a"/></linearGradient></defs><path d="M9 4.500h3" stroke="#1f9be8" stroke-width="6"/><path d="M11 15.500h3" stroke="#f0704a" stroke-width="6"/><path d="M9 4.500 5.500 15" stroke="url(#g7)" stroke-width="7"/><path d="M16.500 5 13.500 15.500" stroke="url(#g8)" stroke-width="7"/><ellipse cx="11" cy="10" rx="1.500" ry="3" fill="#fff" stroke="none" transform="rotate(16 11 10)"/></svg>

<!-- zoom panel -->
<div class="panel" style="left:1392px;top:588px;width:40px;height:161px"></div>
<svg style="left:1405px;top:601px" width="15" height="15"><circle cx="6" cy="6" r="5.200" stroke="#333"/><path d="m10 10 4.500 4.500M6 3.500v5M3.500 6h5" stroke="#333"/></svg>
<svg style="left:1405px;top:641px" width="15" height="15"><circle cx="6" cy="6" r="5.200" stroke="#333"/><path d="m10 10 4.500 4.500M3.500 6h5" stroke="#333"/></svg>
<svg style="left:1404px;top:682px" width="16" height="12"><rect x=".6" y=".6" width="14.800" height="10.800" rx="1" stroke="#333"/><path d="M3 6h3.500M9.500 6H13M4.500 4.500 3 6l1.500 1.500M11.500 4.500 13 6l-1.500 1.500" stroke="#333"/></svg>
<div class="a" style="left:1404px;top:708px;width:16px;height:1px;background:#ccc"></div>
<svg style="left:1404px;top:721px" width="16" height="16"><path d="M6.500 1h3l.5 2 1.700 1 2-.6 1.500 2.600-1.500 1.500v1.500l1.500 1.500-1.500 2.600-2-.6-1.700 1-.5 2h-3l-.5-2-1.700-1-2 .6L.8 10.500l1.500-1.500V7.500L.8 6l1.500-2.600 2 .6L6 3z" stroke="#333"/><circle cx="8" cy="8" r="2" stroke="#333"/></svg>

</body></html>
